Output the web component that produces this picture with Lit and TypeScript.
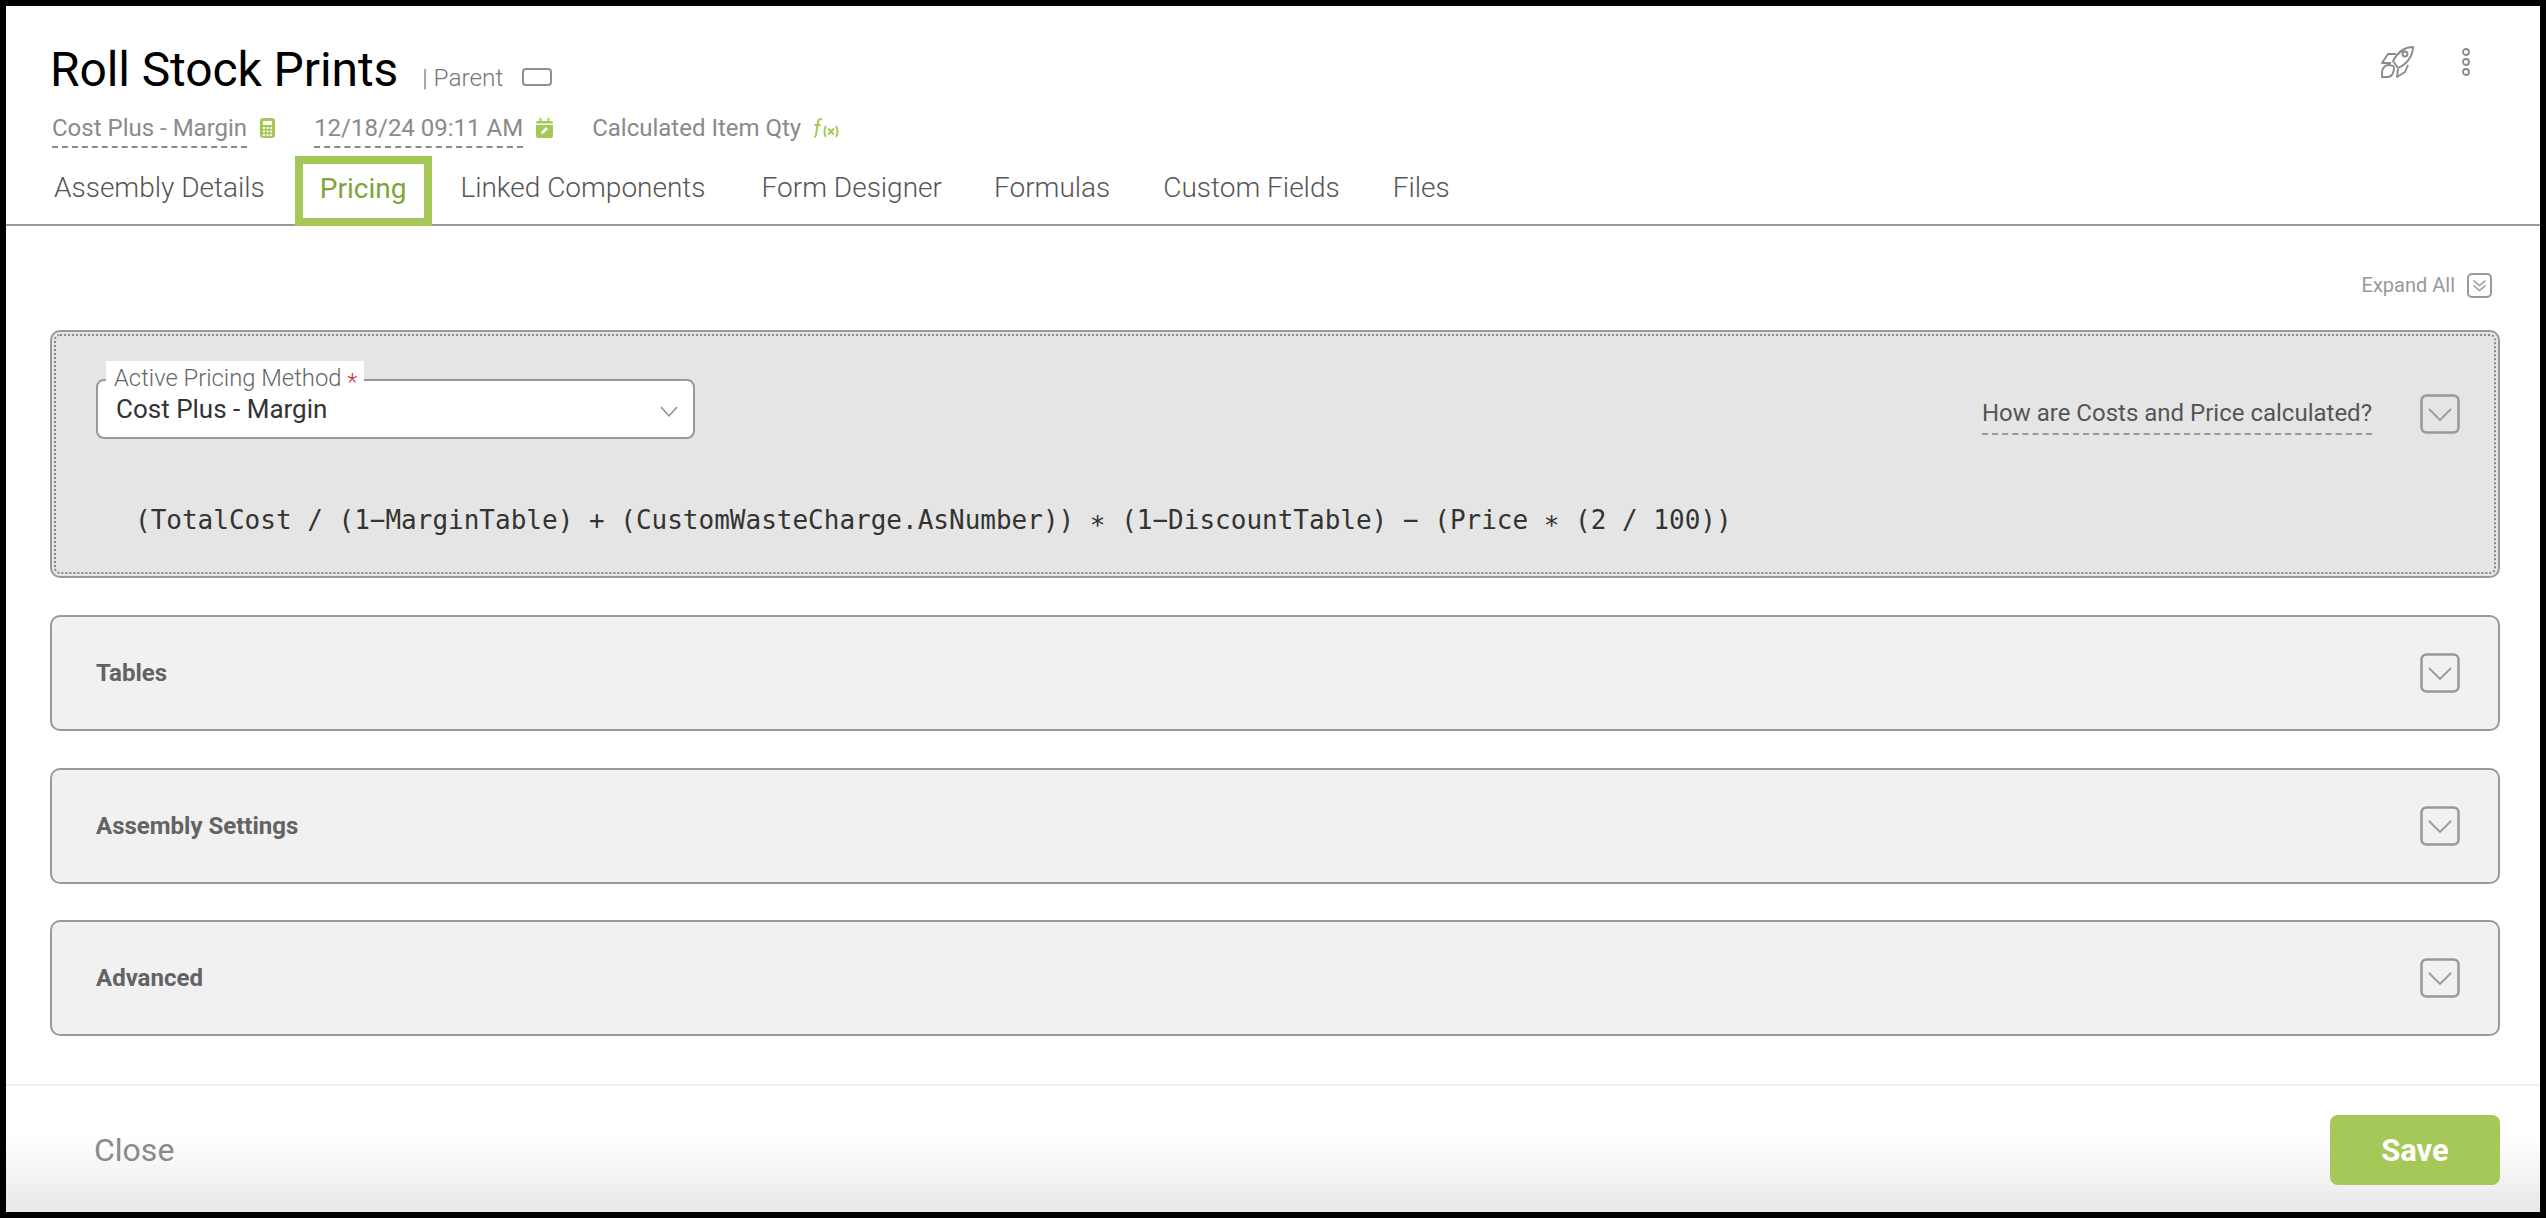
import { LitElement, html, css, svg } from "lit";
import { customElement } from "lit/decorators.js";

const chev = svg`<svg class="chev" viewBox="0 0 40 40" width="40" height="40"><rect x="1.500" y="1.500" width="37" height="37" rx="5" fill="none" stroke="#999" stroke-width="2.500"/><path d="M9 15l11 11 11-11" fill="none" stroke="#999" stroke-width="1.800"/></svg>`;

@customElement("app-root")
export class AppRoot extends LitElement {
  static styles = css`
    :host { display: block; height: 1218px; box-sizing: border-box; border: 6px solid #000; background: #fff; font-family: Roboto, sans-serif; color: #8a8a8a; overflow: hidden; }
    .page { height: 100%; display: flex; flex-direction: column; }
    .head { display: flex; justify-content: space-between; padding: 0 69px 0 44px; height: 150px; }
    .head-l { display: flex; flex-direction: column; }
    .title-row { display: flex; align-items: baseline; padding-top: 34px; height: 60px; }
    h1 { margin: 0; font-size: 48px; line-height: 60px; font-weight: 400; color: #000; letter-spacing: -0.1px; }
    .parent { margin-left: 24px; font-size: 24.400px; font-weight: 300; color: #777; }
    .toggle { display: inline-block; width: 26px; height: 14px; border: 2px solid #8f8f8f; border-radius: 4px; margin-left: 19px; }
    .meta { display: flex; align-items: flex-start; margin-top: 13px; margin-left: 2px; font-size: 24px; line-height: 30px; color: #8a8a8a; }
    .dash { border-bottom: 2px dashed #8a8a8a; padding-bottom: 3px; display: block; }
    .meta-item { display: flex; align-items: flex-start; }
    .meta-item svg { margin: 5px 0 0 13px; }
    .m2 { margin-left: 39px; }
    .m3 { margin-left: 39px; }
    .head-r { display: flex; gap: 47px; padding-top: 40px; align-items: flex-start; }
    .dots-v { margin-top: 1px; }
    .tabs { display: flex; align-items: stretch; height: 70px; padding-left: 48px; border-bottom: 2px solid #999; box-sizing: border-box; font-size: 28px; font-weight: 300; color: #555; }
    .tab { display: flex; align-items: center; margin-right: 53px; padding-bottom: 6px; }
    .tab.first { margin-right: 30px; }
    .tab.active { color: #7fa43a; font-weight: 400; box-sizing: border-box; border: 8px solid #a5c858; height: 70px; margin: 0 28px 0 0; padding: 0 18px 6px 17px; }
    .tab.linked { margin-right: 56px; }
    .tab.form { margin-right: 52px; }
    .body { flex: 1; padding: 0 40px 0 44px; display: flex; flex-direction: column; }
    .expand { display: flex; justify-content: flex-end; align-items: center; gap: 12px; font-size: 20px; color: #999; height: 28px; margin-top: 45px; padding-right: 8px; }
    .card { box-sizing: border-box; border: 2px solid #999; border-radius: 10px; background: #f1f1f1; display: flex; align-items: center; justify-content: space-between; padding: 0 38px 0 44px; height: 116px; margin-bottom: 36.500px; font-size: 24px; font-weight: 700; color: #636363; }
    .card.main { display: block; height: 248px; margin-top: 31px; margin-bottom: 37px; padding: 0; background: #e5e5e5; font-weight: 400; }
    .dots { box-sizing: border-box; height: calc(100% - 4px); border: 2px dotted #8a8a8a; border-radius: 6px; margin: 2px; padding: 0 34px 0 40px; display: flex; flex-direction: column; }
    .row { display: flex; justify-content: space-between; align-items: flex-start; padding-top: 43px; height: 60px; box-sizing: content-box; }
    .field { position: relative; box-sizing: border-box; width: 599px; height: 60px; background: #fff; border: 2px solid #999; border-radius: 8px; display: flex; align-items: center; justify-content: space-between; padding: 0 15px 0 18px; font-size: 26px; color: #333; }
    .field svg { margin-top: 6px; }
    .legend { position: absolute; left: 8px; top: -20px; background: #fff; padding: 5px 7px 0 8px; height: 27px; box-sizing: border-box; font-size: 23.800px; line-height: 24px; font-weight: 300; color: #666; white-space: nowrap; }
    .legend b { color: #c8323c; font-weight: 300; vertical-align: -4px; }
    .how { display: flex; align-items: flex-start; gap: 48px; margin-top: 15px; }
    .how .dash { font-size: 24px; line-height: 34px; color: #555; padding-bottom: 3px; margin-top: 2px; border-bottom-color: #999; }
    .formula { margin-top: 65px; padding-left: 39px; font-family: "DejaVu Sans Mono", monospace; font-size: 26px; line-height: 32px; color: #333; white-space: nowrap; }
    .spacer { flex: 1; }
    .foot { height: 128px; box-sizing: border-box; border-top: 2px solid #eeeeee; display: flex; justify-content: space-between; align-items: center; padding: 2px 40px 0 88px; background: linear-gradient(to bottom, #fff 0, #fff 40%, #e8e8e8 100%); font-size: 32px; color: #8a8a8a; }
    .save { box-sizing: border-box; width: 170px; height: 70px; display: flex; align-items: center; justify-content: center; background: #a5c858; color: #fff; border-radius: 8px; font-weight: 700; font-size: 31px; }
  `;

  render() {
    return html`<div class="page">
      <div class="head">
        <div class="head-l">
          <div class="title-row"><h1>Roll Stock Prints</h1><span class="parent">| Parent</span><span class="toggle"></span></div>
          <div class="meta">
            <div class="meta-item"><span class="dash">Cost Plus - Margin</span>
              <svg width="15" height="20" viewBox="0 0 15 20"><rect width="15" height="20" rx="3" fill="#a5c858"/><rect x="3" y="3" width="9" height="4" fill="#fff"/><path d="M3 9h2v2H3zM6.500 9h2v2h-2zM10 9h2v2h-2zM3 12.500h2v2H3zM6.500 12.500h2v2h-2zM10 12.500h2v2h-2zM3 16h2v2H3zM6.500 16h2v2h-2zM10 16h2v2h-2z" fill="#fff"/></svg></div>
            <div class="meta-item m2"><span class="dash">12/18/24 09:11 AM</span>
              <svg width="17" height="20" viewBox="0 0 17 20"><rect y="3" width="17" height="17" rx="2" fill="#a5c858"/><path d="M3.500 0h2v4h-2zM11.500 0h2v4h-2z" fill="#a5c858"/><rect y="5.500" width="17" height="1.500" fill="#fff"/><path d="M5 16l.5-2.500 4.500-4.500 2 2-4.500 4.500z" fill="#fff"/></svg></div>
            <div class="meta-item m3"><span>Calculated Item Qty</span>
              <svg width="25" height="22" viewBox="0 0 25 22"><path d="M8 1.500c-2-1-3.500 0-4 2L2 17c-.3 1.500-1 2-2 2M.5 7h6" fill="none" stroke="#a5c858" stroke-width="2"/><path d="M12 8c-2 3-2 8 0 11M22 8c2 3 2 8 0 11M14 10.500l6 6M20 10.500l-6 6" fill="none" stroke="#a5c858" stroke-width="2"/></svg></div>
          </div>
        </div>
        <div class="head-r">
          <svg width="33" height="33" viewBox="0 0 33 33" fill="none" stroke="#8a8a8a" stroke-width="1.900" stroke-linejoin="round"><path d="M32 1C24 1 17 6 12 15l5 7C26 18 32 10 32 1z"/><circle cx="24" cy="8" r="2.500"/><path d="M15 8H7L1 17h9M27 19l-3 7-8 5 1-8M1 31v-5c0-3 3-7 6-7 3 0 6 1 6 2 0 3-1 6-1 6-1 2-3 4-5 4z"/></svg>
          <svg class="dots-v" width="10" height="30" viewBox="0 0 10 30" fill="none" stroke="#8a8a8a" stroke-width="1.800"><circle cx="5" cy="5" r="3"/><circle cx="5" cy="15" r="3"/><circle cx="5" cy="25" r="3"/></svg>
        </div>
      </div>
      <div class="tabs">
        <div class="tab first">Assembly Details</div>
        <div class="tab active">Pricing</div>
        <div class="tab linked">Linked Components</div>
        <div class="tab form">Form Designer</div>
        <div class="tab">Formulas</div>
        <div class="tab">Custom Fields</div>
        <div class="tab">Files</div>
      </div>
      <div class="body">
        <div class="expand"><span>Expand All</span>
          <svg width="25" height="25" viewBox="0 0 25 25" fill="none" stroke="#999"><rect x="1" y="1" width="23" height="23" rx="4" stroke-width="2"/><path d="M6.500 7.500l6 5 6-5M6.500 12.500l6 5 6-5" stroke-width="1.500"/></svg></div>
        <div class="card main"><div class="dots">
          <div class="row">
            <div class="field"><div class="legend">Active Pricing Method <b>*</b></div><span>Cost Plus - Margin</span>
              <svg width="18" height="12" viewBox="0 0 18 12" fill="none" stroke="#888" stroke-width="1.300"><path d="M1 1l8 9 8-9"/></svg></div>
            <div class="how"><span class="dash">How are Costs and Price calculated?</span>${chev}</div>
          </div>
          <div class="formula">(TotalCost / (1−MarginTable) + (CustomWasteCharge.AsNumber)) ∗ (1−DiscountTable) − (Price ∗ (2 / 100))</div>
        </div></div>
        <div class="card"><span>Tables</span>${chev}</div>
        <div class="card"><span>Assembly Settings</span>${chev}</div>
        <div class="card"><span>Advanced</span>${chev}</div>
        <div class="spacer"></div>
      </div>
      <div class="foot"><span>Close</span><div class="save">Save</div></div>
    </div>`;
  }
}
